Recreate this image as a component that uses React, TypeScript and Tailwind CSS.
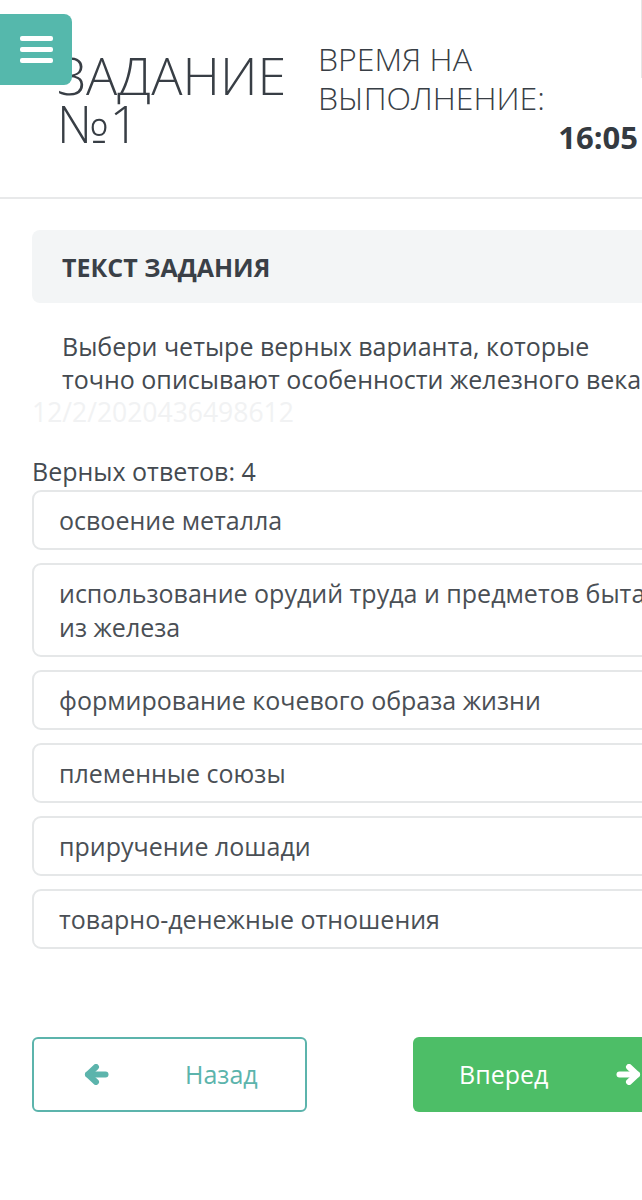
import React from "react";

const options = [
  "освоение металла",
  "использование орудий труда и предметов быта из железа",
  "формирование кочевого образа жизни",
  "племенные союзы",
  "приручение лошади",
  "товарно-денежные отношения",
];

function Arrow({ dir }: { dir: "left" | "right" }) {
  return (
    <svg
      width="25"
      height="21"
      viewBox="0 0 25 21"
      fill="none"
      stroke="currentColor"
      strokeWidth="6"
      strokeLinecap="round"
      strokeLinejoin="round"
      style={dir === "right" ? { transform: "scaleX(-1)" } : undefined}
    >
      <path d="M4 10.5H21.5" />
      <path d="M12 3L4 10.5L12 18" />
    </svg>
  );
}

export default function App() {
  return (
    <div
      className="relative w-[642px] min-h-[1200px] overflow-hidden bg-white text-[#3d434a]"
      style={{ fontFamily: '"Open Sans", "Noto Sans", sans-serif' }}
    >
      <div className="w-[720px]">
        <header className="flex h-[199px] border-b-2 border-[#e8e9ea] pt-[39px]">
          <h1 className="ml-[57px] mt-[12px] w-[261px] text-[52px] font-light leading-[48px] text-[#383e45]">
            ЗАДАНИЕ
            <br />
            №1
          </h1>
          <div className="w-[320px]">
            <div className="text-[32px] font-light leading-[39px] text-[#383e45]">
              ВРЕМЯ НА ВЫПОЛНЕНИЕ:
            </div>
            <div className="mt-[5px] text-right text-[31px] font-bold leading-[30px] text-[#343a41]">
              16:05
            </div>
          </div>
        </header>

        <main className="px-[32px]">
          <div className="mt-[31px] flex h-[73px] items-center rounded-[8px] bg-[#f3f5f6] px-[30px]">
            <h2 className="text-[25px] font-bold leading-[30px] text-[#3a4047]">ТЕКСТ ЗАДАНИЯ</h2>
          </div>

          <p className="mt-[27px] px-[30px] text-[25px] leading-[33px] text-[#444a50]">
            <span className="block whitespace-nowrap">Выбери четыре верных варианта, которые</span>
            <span className="block whitespace-nowrap">точно описывают особенности железного века.</span>
          </p>

          <div className="text-[26.5px] leading-[33px] text-[#f1f2f3]">12/2/2020436498612</div>

          <div className="mt-[26px] text-[25px] leading-[33px] text-[#444a50]">Верных ответов: 4</div>

          <div className="mt-[2px] flex flex-col gap-[13px]">
            {options.map((o) => (
              <div
                key={o}
                className="rounded-[9px] border-2 border-[#e5e7e8] py-[11px] pl-[25px] pr-[25px] text-[25px] leading-[34px] text-[#4a4f55]"
              >
                {o}
              </div>
            ))}
          </div>

          <div className="mt-[88px] flex justify-between">
            <button className="flex h-[75px] w-[275px] items-center rounded-[6px] border-2 border-[#5cb4ac] bg-white pl-[50px] text-[25px] text-[#5cb4ac]">
              <Arrow dir="left" />
              <span className="ml-[76px]">Назад</span>
            </button>
            <button className="flex h-[75px] w-[275px] items-center rounded-[6px] bg-[#4dbe67] pl-[46px] text-[25px] text-white">
              <span>Вперед</span>
              <span className="ml-[68px] flex">
                <Arrow dir="right" />
              </span>
            </button>
          </div>
        </main>
      </div>

      <div className="absolute left-[-8px] top-[14px] flex h-[71px] w-[80px] flex-col items-start justify-center gap-[6px] rounded-[8px] bg-[#55b8ac] pl-[28px]">
        <span className="block h-[5px] w-[33px] rounded-[2px] bg-white" />
        <span className="block h-[5px] w-[33px] rounded-[2px] bg-white" />
        <span className="block h-[5px] w-[33px] rounded-[2px] bg-white" />
      </div>
      <div className="absolute right-0 top-0 h-[78px] w-px bg-[#e6e6e6]" />
    </div>
  );
}
